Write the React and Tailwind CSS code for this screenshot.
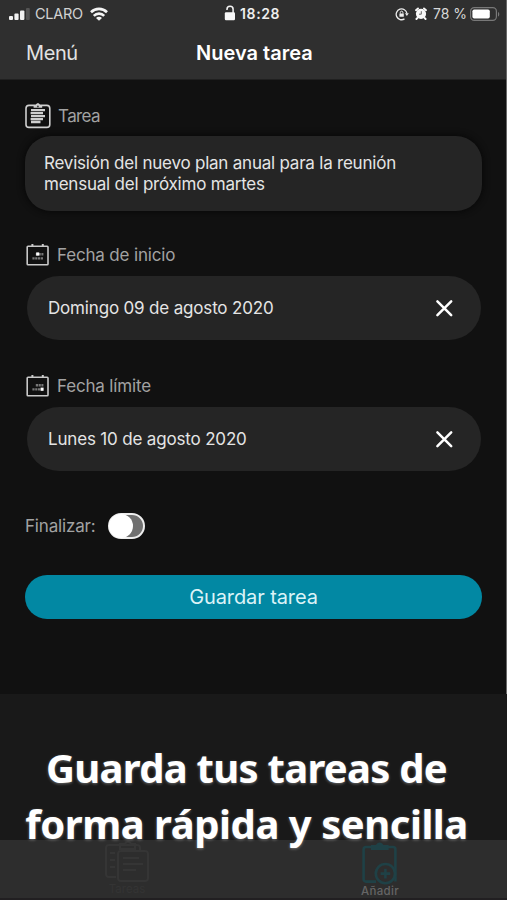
import React from "react";

function Signal() {
  return (
    <svg className="h-[12px] w-[21px] shrink-0" viewBox="0 0 21 12">
      <rect x="0" y="8" width="4" height="4" rx="1" fill="#f2f2f2" />
      <rect x="5.4" y="5.6" width="4.2" height="6.4" rx="1" fill="#f2f2f2" />
      <rect x="11" y="2.6" width="4.4" height="9.4" rx="1" fill="#f2f2f2" />
      <rect x="17" y="0" width="3.8" height="12" rx="1" fill="#545454" />
    </svg>
  );
}

function Wifi() {
  return (
    <svg className="h-[14px] w-[18px] shrink-0" viewBox="0 0 18 14" fill="none" stroke="#f4f4f4" strokeWidth="2.6">
      <path d="M1 5.2a11.4 11.4 0 0 1 16 0" />
      <path d="M3.8 8.8a7.3 7.3 0 0 1 10.4 0" />
      <path d="M9 13.8 6 10.9a4.2 4.2 0 0 1 6 0z" fill="#f4f4f4" stroke="none" />
    </svg>
  );
}

function OpenLock() {
  return (
    <svg className="h-[16px] w-[12px] shrink-0" viewBox="0 0 12 16">
      <path d="M3 5V4.2C3 .4 9.1.4 9.1 4.2V8" fill="none" stroke="#f4f4f4" strokeWidth="1.5" />
      <rect x="0.8" y="7.2" width="10.2" height="8" rx="1.2" fill="#f8f8f8" />
    </svg>
  );
}

function RotationLock() {
  return (
    <svg className="h-[14px] w-[14px] shrink-0" viewBox="0 0 14 14" fill="none" stroke="#ececec" strokeWidth="1.3">
      <path d="M9.5 11.9A5.4 5.4 0 1 1 11.9 6.4" />
      <path d="M10 6.3h3.8L11.9 9z" fill="#ececec" stroke="none" />
      <rect x="4.4" y="6.4" width="4.4" height="3.4" rx=".5" fill="#ececec" stroke="none" />
      <path d="M5.3 6.6V5.4c0-1.7 2.6-1.7 2.6 0v1.2" strokeWidth="1" />
    </svg>
  );
}

function Alarm() {
  return (
    <svg className="h-[13px] w-[12px] shrink-0" viewBox="0 0 12 13">
      <circle cx="6" cy="6.8" r="5.1" fill="#f8f8f8" />
      <path d="M1 3.2 3 1.4M11 3.2 9 1.4M2.4 11 1.4 12M9.6 11l1 1" stroke="#f8f8f8" strokeWidth="1.9" strokeLinecap="round" />
      <path d="M6.3 4.2v3H4" fill="none" stroke="#555" strokeWidth=".9" />
    </svg>
  );
}

function Battery() {
  return (
    <svg className="h-[14px] w-[30px] shrink-0" viewBox="0 0 30 14">
      <rect x=".6" y=".6" width="25.8" height="12.8" rx="3.6" fill="none" stroke="#787878" strokeWidth="1.2" />
      <rect x="2.4" y="2.4" width="17.4" height="9.2" rx="1.8" fill="#fff" />
      <path d="M28 4.9c1.7.6 1.7 4 0 4.6z" fill="#787878" />
    </svg>
  );
}

function TaskIcon() {
  return (
    <svg className="h-[26px] w-[26px] shrink-0" viewBox="0 0 26 26" fill="none" stroke="#d0d0d0">
      <rect x="1" y="2.4" width="23.8" height="22" rx="3" strokeWidth="1.6" />
      <path d="M8.6 2h2.2c.5-2.4 3.7-2.4 4.2 0h2.2v2.8H8.6z" fill="#d0d0d0" stroke="none" />
      <circle cx="12.9" cy="3.4" r="1" fill="#444" stroke="none" />
      <path d="M6 7.2h14M5.6 10.2h12.4M6 13.2h14M5.6 16.2h12.4M6 19h9.5" strokeWidth="2.3" />
    </svg>
  );
}

function CalendarIcon({ end }) {
  return (
    <svg className="h-[24px] w-[24px] shrink-0" viewBox="0 0 24 24" fill="none" stroke="#c9c9c9">
      <rect x="2.2" y="3.2" width="20.8" height="18.6" rx=".8" strokeWidth="1.6" />
      <path d="M7.4 1v2.6M17.8 1v2.6" strokeWidth="2" />
      <path d="M10.8 11.2h7.6" stroke="#777" strokeWidth="2.4" strokeDasharray="2.2 .6" />
      <path d="M7.4 15.4h11" stroke="#777" strokeWidth="2.4" strokeDasharray="2.2 .6" />
      {end ? (
        <rect x="15.6" y="13.6" width="3" height="3.2" fill="#fff" stroke="none" />
      ) : (
        <rect x="11.2" y="9.4" width="3" height="3.2" fill="#fff" stroke="none" />
      )}
    </svg>
  );
}

function Cross() {
  return (
    <svg className="h-[18px] w-[18px] shrink-0" viewBox="0 0 18 18" stroke="#fff" strokeWidth="2.5" strokeLinecap="round">
      <path d="M2.4 2.4 16.2 16.2M16.2 2.4 2.4 16.2" />
    </svg>
  );
}

function TasksTab() {
  return (
    <svg className="h-[42px] w-[46px]" viewBox="0 0 46 42" fill="none" stroke="#353535" strokeWidth="2">
      <path d="M12 36H5a3 3 0 0 1-3-3V7a3 3 0 0 1 3-3h28a3 3 0 0 1 3 3v2" />
      <path d="M6 12h5M6 19h5M6 26h5" />
      <path d="M16 3h5c1-3 5-3 6 0h4v5H16z" />
      <rect x="14" y="10" width="30" height="30" rx="3" />
      <path d="M19 17h16M19 23h20M19 29h13" />
    </svg>
  );
}

function AddTab() {
  return (
    <svg className="h-[44px] w-[36px]" viewBox="0 0 36 44" fill="none" stroke="#1f4146" strokeWidth="2.6">
      <path d="M14 40.6H4a2.4 2.4 0 0 1-2.4-2.4V8.4A2.4 2.4 0 0 1 4 6h27a2.4 2.4 0 0 1 2.4 2.4v32" />
      <path d="M9 9V4h5c1.4-3.4 6-3.4 7.4 0h5.2v5z" fill="#1f4146" stroke="none" />
      <circle cx="23.4" cy="32.6" r="9.6" />
      <path d="M23.4 27.8v9.6M18.6 32.6h9.6" />
    </svg>
  );
}

function DateField({ label, value, end }) {
  return (
    <div className="flex flex-col">
      <div className="flex h-[24px] items-center pl-[25px]">
        <CalendarIcon end={end} />
        <span className="ml-[8px] pb-px text-[17px] leading-[24px] tracking-[-0.01em] text-[#a2a2a2]">{label}</span>
      </div>
      <div className="mx-[27px] mt-[9px] flex h-[64px] w-[454px] items-center justify-between rounded-full bg-[#252525] pr-[28px] pl-[21px]">
        <span className="pt-[2px] text-[17px] tracking-[-0.01em] text-[#e4e4e4]">{value}</span>
        <Cross />
      </div>
    </div>
  );
}

export default function App() {
  return (
    <div className="h-[900px] w-[507px] overflow-hidden bg-[#111111] font-['Inter',sans-serif] whitespace-nowrap">
      <div className="flex h-[694px] flex-col border-r border-[#686868]">
        <header className="h-[80px] shrink-0 border-b border-[#202020] bg-[#2f2f2f]">
          <div className="grid h-[27px] grid-cols-[224px_1fr_111px] items-center text-[14px]">
            <div className="flex items-center pl-[9px]">
              <Signal />
              <span className="ml-[5px] w-[49px] text-[14.5px] tracking-[-0.02em] text-[#d2d2d2]">CLARO</span>
              <span className="ml-[6px] flex"><Wifi /></span>
            </div>
            <div className="flex items-center">
              <span className="flex pb-[2px]"><OpenLock /></span>
              <span className="ml-[4px] tracking-[0.045em] font-semibold text-[#eeeeee]">18:28</span>
            </div>
            <div className="flex items-center">
              <RotationLock />
              <span className="ml-[6px] flex"><Alarm /></span>
              <span className="ml-[6px] w-[35px] text-[#d8d8d8]">78 %</span>
              <span className="ml-[2px] flex"><Battery /></span>
            </div>
          </div>
          <div className="grid h-[51px] grid-cols-[196px_1fr] items-center text-[20px]">
            <span className="pl-[26px] tracking-[-0.02em] text-[#e2e2e2]">Menú</span>
            <span className="font-semibold text-white">Nueva tarea</span>
          </div>
        </header>

        <main className="flex flex-col">
          <div className="mt-[23px] flex h-[26px] items-center pl-[25px]">
            <TaskIcon />
            <span className="ml-[7px] pb-px text-[17px] leading-[24px] tracking-[-0.035em] text-[#a2a2a2]">Tarea</span>
          </div>
          <div className="mx-[25px] mt-[7px] h-[75px] w-[457px] rounded-[26px] bg-[#252525] pt-[17px] pl-[19px] text-[17px] leading-[21px] tracking-[-0.013em] text-[#e4e4e4] shadow-[0_0_6px_1px_#080808]">
            Revisión del nuevo plan anual para la reunión
            <br />
            mensual del próximo martes
          </div>
          <div className="mt-[32px]">
            <DateField label="Fecha de inicio" value="Domingo 09 de agosto 2020" />
          </div>
          <div className="mt-[34px]">
            <DateField label="Fecha límite" value="Lunes 10 de agosto 2020" end />
          </div>
          <div className="mt-[42px] flex h-[26px] items-center pl-[25px]">
            <span className="w-[83px] pt-[2px] text-[17px] tracking-[-0.01em] text-[#a2a2a2]">Finalizar:</span>
            <span className="flex h-[26px] w-[37px] items-center rounded-full border-2 border-[#eeeeee] bg-[#707070]">
              <span className="-ml-px h-[24px] w-[24px] shrink-0 rounded-full bg-white" />
            </span>
          </div>
          <button className="mx-[25px] mt-[36px] h-[44px] w-[457px] rounded-full bg-[#0288a3] text-[20px] tracking-[-0.005em] text-[#dcf3f7]">
            Guardar tarea
          </button>
        </main>
      </div>

      <footer className="relative h-[206px] bg-[#191919] pt-[146px]">
        <div className="flex h-[60px] justify-between border-b-2 border-[#211f21] bg-[#2d2d2d] pt-[1px] pr-[108px] pl-[104px] text-[11.5px] leading-[12px]">
          <div className="flex w-[46px] flex-col items-center">
            <TasksTab />
            <span className="text-[#343434]">Tareas</span>
          </div>
          <div className="flex w-[38px] flex-col items-center">
            <AddTab />
            <span className="font-medium tracking-[0.03em] text-[#656565]">Añadir</span>
          </div>
        </div>
        <h1 className="absolute top-[46px] left-0 flex w-[493px] flex-col items-center font-['Noto_Sans',sans-serif] text-[40px] leading-[56px] font-bold text-white [text-shadow:0_1px_3px_rgba(255,255,255,0.35)]">
          <span className="tracking-[-0.72px]">Guarda tus tareas de</span>
          <span className="tracking-[-0.46px]">forma rápida y sencilla</span>
        </h1>
      </footer>
    </div>
  );
}
